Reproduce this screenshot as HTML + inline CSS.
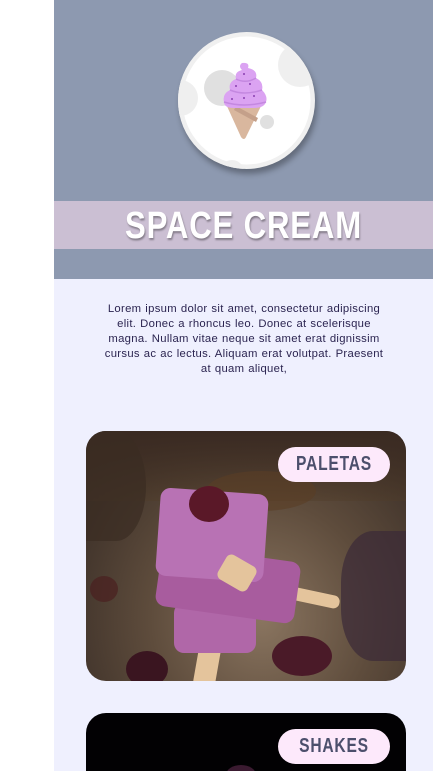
<!DOCTYPE html>
<html><head><style>
*{margin:0;padding:0;box-sizing:border-box}
body{width:433px;height:771px;overflow:hidden;background:#fff;position:relative;font-family:"Liberation Sans",sans-serif}
#main{position:absolute;left:54px;top:0;width:379px;height:771px;background:#eff0fe;overflow:hidden}
#hdr{position:absolute;left:0;top:0;width:379px;height:279px;background:#8d99b0}
#band{position:absolute;left:0;top:201px;width:379px;height:48px;background:#cbbfd3}
#band div{text-align:center;font:bold 38px/50px "Liberation Sans",sans-serif;color:#fff;letter-spacing:1px;text-shadow:1px 2px 2px rgba(0,0,0,.35);transform:scaleX(.82)}
#circ{position:absolute;left:124px;top:32px;width:137px;height:137px;border-radius:50%;background:#f0f0f0;box-shadow:2px 5px 6px rgba(0,0,0,.3);overflow:hidden}
#txt{position:absolute;left:10px;top:302px;width:360px;text-align:center;font-size:11.3px;line-height:15px;color:#2b2450;white-space:nowrap;letter-spacing:.3px;word-spacing:.5px}
.card{position:absolute;left:32px;width:320px;border-radius:20px;overflow:hidden}
.pill{position:absolute;left:192px;top:16px;width:112px;height:35px;border-radius:18px;background:#fde9fb;color:#4c4f6c;text-align:center}
.pill div{font:bold 20px/35px "Liberation Sans",sans-serif;letter-spacing:1px;transform:scaleX(.78)}
</style></head><body>
<div id="main">
<div id="hdr">
<div id="circ">
<svg width="137" height="137" viewBox="0 0 137 137">
<circle cx="68.5" cy="68.5" r="64" fill="#fff"/>
<circle cx="122" cy="33" r="22" fill="#efefef"/>
<circle cx="2" cy="66" r="18" fill="#efefef"/>
<circle cx="54" cy="140" r="12" fill="#efefef"/>
<circle cx="44" cy="56" r="18" fill="#e0e0e0"/>
<circle cx="89" cy="90" r="7" fill="#e0e0e0"/>
<path d="M48 72 L84 72 L68 105 Q66 109 63 105 Z" fill="#d9b79e"/>
<path d="M58 74 L80 86 L78 90 L56 78Z" fill="#c4a08a"/>
<path d="M64 31 Q72 30 70 36 Q80 38 78 46 Q86 50 84 58 Q90 64 88 70 Q86 76 76 76 L56 76 Q46 76 46 70 Q44 62 52 58 Q50 50 58 47 Q56 40 64 38 Q60 34 64 31Z" fill="#dba3f2"/>
<path d="M58 47 Q68 52 78 46 M52 58 Q66 64 84 58 M46 70 Q66 76 88 70" stroke="#c488e0" stroke-width="1.5" fill="none"/>
<circle cx="66" cy="42" r="1" fill="#8a3fb0"/><circle cx="72" cy="52" r="1" fill="#8a3fb0"/><circle cx="58" cy="54" r="1" fill="#8a3fb0"/><circle cx="76" cy="64" r="1" fill="#8a3fb0"/><circle cx="54" cy="67" r="1" fill="#8a3fb0"/><circle cx="66" cy="66" r="1" fill="#8a3fb0"/>
</svg>
</div>
<div id="band"><div>SPACE CREAM</div></div>
</div>
<div id="txt">Lorem ipsum dolor sit amet, consectetur adipiscing<br>elit. Donec a rhoncus leo. Donec at scelerisque<br>magna. Nullam vitae neque sit amet erat dignissim<br>cursus ac ac lectus. Aliquam erat volutpat. Praesent<br>at quam aliquet,</div>
<div class="card" style="top:431px;height:250px;background:radial-gradient(ellipse at 55% 75%,#8a7560 0%,#5e4c3c 45%,#2e2420 100%)">
<div style="position:absolute;left:0;top:0;width:320px;height:70px;background:linear-gradient(#3a2a22,rgba(80,60,40,.4))"></div>
<div style="position:absolute;left:120px;top:40px;width:110px;height:40px;background:#5a3e25;border-radius:50%;opacity:.6"></div>
<div style="position:absolute;left:0;top:0;width:60px;height:110px;background:#3a2c22;border-radius:0 50% 50% 0;opacity:.7"></div>
<div style="position:absolute;left:255px;top:100px;width:80px;height:130px;background:#3b2a38;border-radius:40% 0 0 40%;opacity:.7"></div>
<div style="position:absolute;left:110px;top:215px;width:22px;height:40px;background:#e4c49c;border-radius:4px;transform:rotate(10deg)"></div>
<div style="position:absolute;left:200px;top:160px;width:54px;height:13px;background:#e4c49c;border-radius:6px;transform:rotate(12deg)"></div>
<div style="position:absolute;left:88px;top:172px;width:82px;height:50px;background:#b067a8;border-radius:10px"></div>
<div style="position:absolute;left:72px;top:122px;width:140px;height:62px;background:#a85c9e;border-radius:10px;transform:rotate(8deg)"></div>
<div style="position:absolute;left:72px;top:60px;width:108px;height:88px;background:#b872b4;border-radius:10px;transform:rotate(4deg)"></div>
<div style="position:absolute;left:134px;top:128px;width:34px;height:28px;background:#e4c49c;border-radius:6px;transform:rotate(30deg)"></div>
<div style="position:absolute;left:103px;top:55px;width:40px;height:36px;background:#5a1828;border-radius:50%"></div>
<div style="position:absolute;left:40px;top:220px;width:42px;height:36px;background:#3a1520;border-radius:50%"></div>
<div style="position:absolute;left:186px;top:205px;width:60px;height:40px;background:#4a1a28;border-radius:50%"></div>
<div style="position:absolute;left:4px;top:145px;width:28px;height:26px;background:#4a2020;border-radius:50%;opacity:.7"></div>
<div class="pill"><div>PALETAS</div></div>
</div>
<div class="card" style="top:713px;height:80px;background:#020103">
<div style="position:absolute;left:140px;top:52px;width:30px;height:20px;background:#3a1a30;border-radius:50%"></div>
<div class="pill"><div>SHAKES</div></div>
</div>
</div>
</body></html>
